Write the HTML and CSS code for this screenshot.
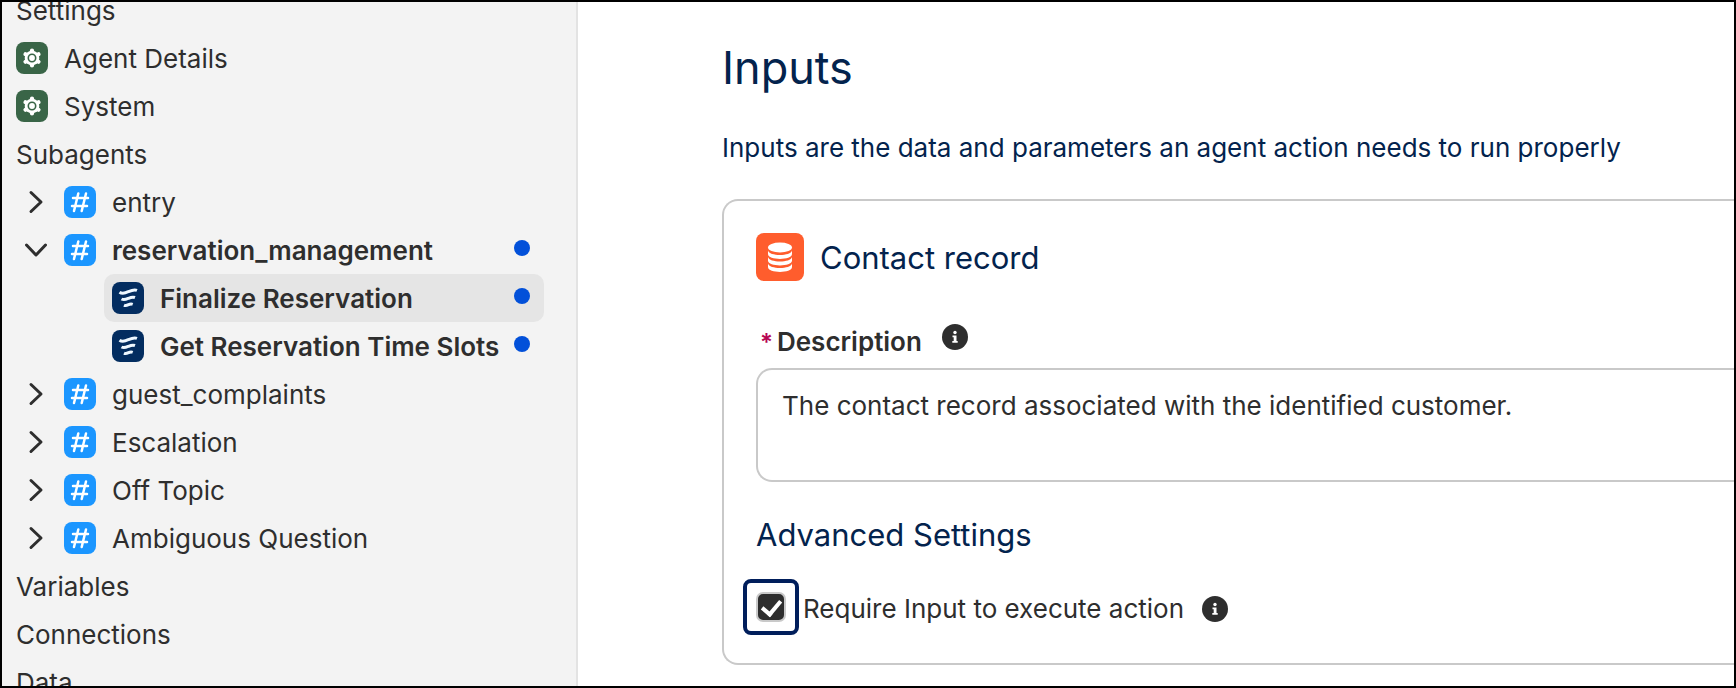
FILE: index.html
```html
<!DOCTYPE html>
<html lang="en">
<head>
  <meta charset="UTF-8">
  <meta name="viewport" content="width=device-width, initial-scale=1.0">
  <title>Agent Builder</title>
  <link rel="stylesheet" href="styles.css">
</head>
<body>
  <svg class="sprite" aria-hidden="true">
    <symbol id="gear" viewBox="0 0 32 32">
      <circle cx="16" cy="16" r="7.300" fill="#fff"/>
      <path fill="none" stroke="#fff" stroke-width="4.200" stroke-linecap="round" d="M16 8.500v15M9.500 12.250l13 7.500M9.500 19.750l13-7.500"/>
      <circle cx="16" cy="16" r="3.700" fill="#fff" stroke="#396547" stroke-width="1.600"/>
    </symbol>
    <symbol id="hash" viewBox="0 0 32 32">
      <path fill="none" stroke="#fff" stroke-width="2.500" stroke-linecap="round" d="M14.300 7.500l-4.300 17.500M22 7.500l-4.300 17.500M9 12h15M8 20h15"/>
    </symbol>
    <symbol id="flow" viewBox="0 0 32 32">
      <path fill="none" stroke="#eef8ff" stroke-width="3" d="M7.500 10.200c3.200 2.200 6 .8 9-.6 2.800-1.300 5.500-2.500 8.500-1.300M9.500 17c2.500 1.500 4.600.4 7-.7 2.200-1 4.200-1.700 6.500-.8M12 23.200c1.700.9 3.100.2 4.500-.5s2.600-1 4.200-.4"/>
    </symbol>
    <symbol id="chevron" viewBox="0 0 24 24">
      <path fill="none" stroke="#2e2e2e" stroke-width="3" stroke-linecap="round" stroke-linejoin="round" d="M7 2.500l10 9.500-10 9.500"/>
    </symbol>
    <symbol id="info" viewBox="0 0 26 26">
      <circle cx="13" cy="13" r="13" fill="#2e2e2e"/>
      <circle cx="13" cy="8.500" r="1.700" fill="#fff"/>
      <path fill="#fff" d="M10.500 11.500h4v5.500h1.200v1.700h-5.400v-1.700h1.400v-3.800h-1.200z"/>
    </symbol>
  </svg>

  <div class="app">
    <nav class="sidebar" aria-label="Agent explorer">
      <div class="row">Settings</div>
      <a class="row" href="#"><svg class="icon green"><use href="#gear"/></svg>Agent Details</a>
      <a class="row" href="#"><svg class="icon green"><use href="#gear"/></svg>System</a>
      <div class="row">Subagents</div>
      <div class="row">
        <button class="toggle" aria-label="Expand entry"><svg><use href="#chevron"/></svg></button>
        <a href="#"><svg class="icon blue"><use href="#hash"/></svg>entry</a>
      </div>
      <div class="row changed">
        <button class="toggle open" aria-label="Collapse reservation_management"><svg><use href="#chevron"/></svg></button>
        <a href="#"><svg class="icon blue"><use href="#hash"/></svg>reservation_management</a>
        <span class="dot"></span>
      </div>
      <div class="row child changed selected">
        <a href="#"><svg class="icon navy"><use href="#flow"/></svg>Finalize Reservation</a>
        <span class="dot"></span>
      </div>
      <div class="row child changed">
        <a href="#"><svg class="icon navy"><use href="#flow"/></svg>Get Reservation Time Slots</a>
        <span class="dot"></span>
      </div>
      <div class="row">
        <button class="toggle" aria-label="Expand guest_complaints"><svg><use href="#chevron"/></svg></button>
        <a href="#"><svg class="icon blue"><use href="#hash"/></svg>guest_complaints</a>
      </div>
      <div class="row">
        <button class="toggle" aria-label="Expand Escalation"><svg><use href="#chevron"/></svg></button>
        <a href="#"><svg class="icon blue"><use href="#hash"/></svg>Escalation</a>
      </div>
      <div class="row">
        <button class="toggle" aria-label="Expand Off Topic"><svg><use href="#chevron"/></svg></button>
        <a href="#"><svg class="icon blue"><use href="#hash"/></svg>Off Topic</a>
      </div>
      <div class="row">
        <button class="toggle" aria-label="Expand Ambiguous Question"><svg><use href="#chevron"/></svg></button>
        <a href="#"><svg class="icon blue"><use href="#hash"/></svg>Ambiguous Question</a>
      </div>
      <div class="row">Variables</div>
      <div class="row">Connections</div>
      <div class="row">Data</div>
    </nav>

    <main class="content">
      <h1>Inputs</h1>
      <p class="intro">Inputs are the data and parameters an agent action needs to run properly</p>

      <section class="card">
        <h2>
          <svg class="record-icon" viewBox="0 0 48 48">
            <ellipse cx="24" cy="14.500" rx="12" ry="5" fill="#fff"/>
            <path fill="#fff" d="M12 17.500c1 6 23 6 24 0v3.500c0 6.500-24 6.500-24 0zM12 24c1 6 23 6 24 0v3.500c0 6.500-24 6.500-24 0zM12 30.500c1 6 23 6 24 0v3.500c0 6.500-24 6.500-24 0z"/>
          </svg>
          Contact record
        </h2>

        <div class="field-label">
          <label for="description"><span class="required">*</span>Description</label>
          <button class="help" aria-label="Help for Description"><svg><use href="#info"/></svg></button>
        </div>
        <textarea id="description">The contact record associated with the identified customer.</textarea>

        <h3>Advanced Settings</h3>
        <div class="check-row">
          <span class="focus-box"><input type="checkbox" id="require-input" checked></span>
          <label for="require-input">Require Input to execute action</label>
          <button class="help" aria-label="Help for Require Input"><svg><use href="#info"/></svg></button>
        </div>
      </section>
    </main>
  </div>
</body>
</html>
```

FILE: styles.css
```css
* {
  box-sizing: border-box;
}
body {
  margin: 0;
  font-family: Inter, "Liberation Sans", sans-serif;
  font-size: 26px;
  color: #2e2e2e;
  background: #fff;
}
.sprite {
  display: none;
}
.app {
  display: grid;
  grid-template-columns: 576px 1fr;
  height: 100vh;
  border: 2px solid #000;
  overflow: hidden;
}
a {
  color: inherit;
  text-decoration: none;
}
button {
  padding: 0;
  border: none;
  background: none;
  cursor: pointer;
}

/* Sidebar */
.sidebar {
  min-height: 0;
  overflow: hidden;
  padding: 0 32px 0 6px;
  background: #f3f3f3;
  border-right: 2px solid #e3e3e3;
}
.row {
  display: flex;
  align-items: center;
  height: 48px;
  padding: 0 8px;
  border-radius: 10px;
  white-space: nowrap;
}
.row:first-child {
  margin-top: -16px;
}
.row a,
a.row {
  display: flex;
  align-items: center;
  gap: 16px;
}
.icon {
  flex: none;
  width: 32px;
  height: 32px;
  border-radius: 8px;
}
.green {
  background: #396547;
}
.blue {
  background: #1b96ff;
}
.navy {
  background: #032d60;
}
.toggle {
  display: flex;
  justify-content: center;
  width: 40px;
  margin-right: 8px;
}
.toggle svg {
  width: 24px;
  height: 24px;
}
.toggle.open svg {
  transform: rotate(90deg);
}
.changed {
  font-weight: 600;
}
.child {
  margin-left: 96px;
}
.selected {
  background: #e5e5e5;
}
.dot {
  width: 16px;
  height: 16px;
  margin: 0 6px 4px auto;
  border-radius: 50%;
  background: #0250d9;
}

/* Inputs panel */
.content {
  min-width: 0;
  overflow: hidden;
  padding: 36px 0 0 144px;
}
h1,
h2,
h3,
.intro {
  margin: 0;
  color: #03234d;
  font-weight: 400;
}
h1 {
  font-size: 45px;
  line-height: 60px;
}
.intro {
  margin-top: 34px;
  line-height: 32px;
}
.card {
  margin-top: 35px;
  padding: 32px 0 28px 32px;
  border: 2px solid #c9c9c9;
  border-right: none;
  border-radius: 16px 0 0 16px;
}
h2 {
  display: flex;
  align-items: center;
  gap: 16px;
  font-size: 31px;
}
.record-icon {
  width: 48px;
  height: 48px;
  border-radius: 8px;
  background: #ff5d2d;
}
.field-label {
  display: flex;
  align-items: center;
  gap: 20px;
  height: 40px;
  margin-top: 40px;
  padding-left: 4px;
  font-weight: 600;
}
.required {
  margin-right: 4px;
  color: #b60554;
  font-size: 24px;
}
.help {
  display: flex;
}
.help svg {
  width: 26px;
  height: 26px;
}
.field-label .help {
  margin-bottom: 8px;
}
textarea {
  display: block;
  width: 100%;
  height: 114px;
  margin-top: 7px;
  padding: 20px 24px;
  border: 2px solid #c9c9c9;
  border-right: none;
  border-radius: 16px 0 0 16px;
  outline: none;
  background: #fff;
  color: inherit;
  font: inherit;
  line-height: 32px;
  resize: none;
}
h3 {
  margin-top: 33px;
  font-size: 31px;
  line-height: 40px;
}
.check-row {
  display: flex;
  align-items: center;
  margin: 24px 0 0 -13px;
}
.focus-box {
  display: grid;
  place-items: center;
  width: 56px;
  height: 56px;
  margin-right: 4px;
  border: 4px solid #001e5b;
  border-radius: 8px;
}
.check-row label {
  padding-top: 2px;
}
.check-row input {
  appearance: none;
  width: 30px;
  height: 30px;
  margin: 0;
  border: 2px solid #c9c9c9;
  border-radius: 7px;
  background: #2e2e2e;
}
.check-row input:checked {
  display: grid;
  place-items: center;
}
.check-row input:checked::after {
  content: "";
  width: 15px;
  height: 8px;
  margin-bottom: 3px;
  border: solid #fff;
  border-width: 0 0 4px 4px;
  transform: rotate(-50deg);
}
.check-row .help {
  margin: 4px 0 0 18px;
}
```
